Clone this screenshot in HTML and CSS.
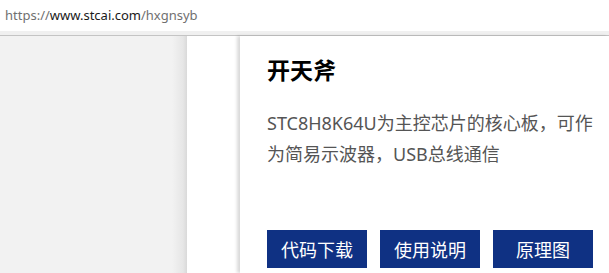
FILE: index.html
```html
<!DOCTYPE html>
<html lang="zh">
<head>
  <meta charset="UTF-8">
  <title>开天斧</title>
  <link rel="stylesheet" href="styles.css">
</head>
<body>
  <div class="addr">
    <span class="dim">https://</span>www.stcai.com<span class="dim">/hxgnsyb</span>
  </div>
  <div class="band"></div>
  <div class="stage">
    <div class="side"></div>
    <div class="slide"></div>
    <div class="card">
      <h2>开天斧</h2>
      <p class="desc">STC8H8K64U为主控芯片的核心板，可作为简易示波器，USB总线通信</p>
      <div class="btns">
        <a class="btn" href="#">代码下载</a>
        <a class="btn" href="#">使用说明</a>
        <a class="btn" href="#">原理图</a>
      </div>
    </div>
  </div>
</body>
</html>
```

FILE: styles.css
```css
body {
  margin: 0;
  font-family: "Noto Sans", "Noto Sans CJK SC", sans-serif;
  background: #fff;
  overflow: hidden;
}
.addr {
  height: 31px;
  line-height: 31px;
  padding-left: 5px;
  font-size: 13px;
  color: #1a1a1a;
  background: #fff;
}
.addr .dim {
  color: #707070;
}
.band {
  height: 4px;
  background: #f0f0f0;
  border-bottom: 1px solid #c4c4c4;
}
.stage {
  display: flex;
  height: 237px;
}
.side {
  width: 187px;
  background: linear-gradient(to right, #f2f2f2 0, #f2f2f2 172px, #e6e6e6 183px, #d9d9d9 187px);
}
.slide {
  width: 53px;
  background: #fff;
}
.card {
  flex: 1;
  background: #fff;
  padding: 15px 0 0 27px;
  box-shadow: -3px 0 3px rgba(0, 0, 0, 0.15);
}
.card h2 {
  margin: 0;
  font-family: "Noto Sans CJK SC", sans-serif;
  font-size: 23px;
  font-weight: bold;
  color: #000;
  line-height: 36px;
}
.desc {
  margin: 21px 0 0;
  width: 330px;
  font-size: 18px;
  line-height: 31px;
  color: #555;
}
.btns {
  display: flex;
  gap: 13px;
  margin-top: 60px;
}
.btn {
  width: 100px;
  height: 38px;
  line-height: 38px;
  text-align: center;
  background: #0f3183;
  color: #fff;
  font-family: "Noto Sans CJK SC", sans-serif;
  font-size: 18px;
  text-decoration: none;
}
```
